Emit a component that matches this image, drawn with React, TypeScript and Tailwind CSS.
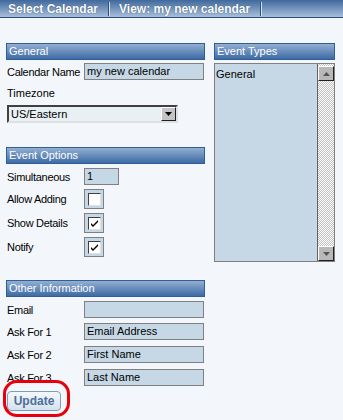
import React from "react";

const font = { fontFamily: '"Liberation Sans", Arial, sans-serif' };

const SectionHeader = ({ title }: { title: string }) => (
  <div className="h-[17px] border border-[#2f5f96] bg-linear-to-b from-[#93afd3] to-[#3d6ba4] pl-[2px] text-[11px] leading-[15px] text-white">
    {title}
  </div>
);

const TextBox = ({ value, className = "" }: { value?: string; className?: string }) => (
  <div
    className={`h-[17px] shrink-0 border border-[#808080] bg-[#c6d8e6] pl-[2px] text-[11px] leading-[15px] text-black ${className}`}
  >
    {value}
  </div>
);

const Check = ({ checked }: { checked: boolean }) => (
  <div className="flex h-[20px] w-[20px] shrink-0 items-center justify-center border border-[#808080] bg-[#c6d8e6]">
    <div className="flex h-[13px] w-[13px] items-center justify-center border border-t-[#404040] border-l-[#404040] border-b-[#e0e0e0] border-r-[#e0e0e0] bg-white">
      {checked && (
        <svg width="9" height="9" viewBox="0 0 9 9">
          <path d="M1 4 L3 6 L8 1 L8 3 L3 8 L1 6 Z" fill="#000" />
        </svg>
      )}
    </div>
  </div>
);

const ScrollBtn = ({ up }: { up: boolean }) => (
  <div className="flex h-[15px] w-[16px] items-center justify-center border border-t-[#fff] border-l-[#fff] border-b-[#202020] border-r-[#202020] bg-[#b8b8b8]">
    <svg width="7" height="4" viewBox="0 0 7 4">
      {up ? <path d="M0 4 L3.5 0 L7 4 Z" fill="#555" /> : <path d="M0 0 L7 0 L3.5 4 Z" fill="#555" />}
    </svg>
  </div>
);

const Row = ({ label, children, className = "" }: { label: string; children: React.ReactNode; className?: string }) => (
  <div className={`flex items-center ${className}`}>
    <div className="w-[78px] shrink-0 whitespace-nowrap pl-[1px] text-[11px] leading-[14px] tracking-[-0.3px] text-black">
      {label}
    </div>
    {children}
  </div>
);

export default function App() {
  return (
    <div className="h-[420px] w-[343px] overflow-hidden bg-[#f3f7fb]" style={font}>
      <div className="flex h-[18px] items-center border-b border-[#28507f] bg-linear-to-b from-[#40699c] to-[#a9bfdb] text-[12px] font-bold text-white [text-shadow:0_0_1px_#1d3d66]">
        <span className="pl-[8px] pr-[10px]">Select Calendar</span>
        <span className="h-[14px] w-[2px] border-l border-[#2a4f7a] border-r border-r-[#d6e2f0]" />
        <span className="pl-[9px] pr-[10px]">View: my new calendar</span>
        <span className="h-[14px] w-[2px] border-l border-[#2a4f7a] border-r border-r-[#d6e2f0]" />
      </div>

      <div className="mt-[25px] flex gap-[9px] pl-[6px]">
        <div className="flex w-[199px] flex-col">
          <SectionHeader title="General" />
          <Row label="Calendar Name" className="mt-[3px]">
            <TextBox value="my new calendar" className="w-[120px]" />
          </Row>
          <div className="mt-[6px] pl-[1px] text-[11px] leading-[14px] text-black">Timezone</div>
          <div className="mt-[5px] ml-[1px] flex h-[18px] w-[171px] items-center justify-between border-2 border-t-[#404040] border-l-[#404040] border-b-[#e0e0e0] border-r-[#e0e0e0] bg-[#e9f0f4] pl-[2px] text-[11px] text-black">
            <span>US/Eastern</span>
            <div className="flex h-[14px] w-[15px] items-center justify-center border border-t-[#fff] border-l-[#fff] border-b-[#202020] border-r-[#202020] bg-[#c4c4c4]">
              <svg width="7" height="4" viewBox="0 0 7 4">
                <path d="M0 0 L7 0 L3.5 4 Z" fill="#000" />
              </svg>
            </div>
          </div>

          <div className="mt-[24px]">
            <SectionHeader title="Event Options" />
          </div>
          <Row label="Simultaneous" className="mt-[4px]">
            <TextBox value="1" className="w-[35px]" />
          </Row>
          <Row label="Allow Adding" className="mt-[4px]">
            <Check checked={false} />
          </Row>
          <Row label="Show Details" className="mt-[4px]">
            <Check checked />
          </Row>
          <Row label="Notify" className="mt-[4px]">
            <Check checked />
          </Row>

          <div className="mt-[23px]">
            <SectionHeader title="Other Information" />
          </div>
          <Row label="Email" className="mt-[4px]">
            <TextBox className="w-[120px]" />
          </Row>
          <Row label="Ask For 1" className="mt-[5px]">
            <TextBox value="Email Address" className="w-[120px]" />
          </Row>
          <Row label="Ask For 2" className="mt-[6px]">
            <TextBox value="First Name" className="w-[120px]" />
          </Row>
          <Row label="Ask For 3" className="mt-[6px]">
            <TextBox value="Last Name" className="w-[120px]" />
          </Row>

          <div className="relative mt-[5px] ml-[1px]">
            <button className="flex h-[20px] w-[54px] items-center justify-center rounded-[4px] border border-[#7f9db9] bg-linear-to-b from-[#f4f8fb] to-[#d6e2ee] text-[12px] font-bold text-[#4d6f9a]">
              Update
            </button>
            <div className="pointer-events-none absolute left-[-4px] top-[-11px] h-[37px] w-[67px] rounded-[14px] border-[3px] border-[#e8000b]" />
          </div>
        </div>

        <div className="flex w-[121px] flex-col">
          <SectionHeader title="Event Types" />
          <div className="mt-[3px] flex h-[199px] border border-[#808080] bg-[#c6d8e6]">
            <div className="flex-1 pl-[1px] pt-[2px] text-[11px] text-black">General</div>
            <div className="flex w-[17px] flex-col border-l border-[#606060] bg-[repeating-conic-gradient(#c0c0c0_0_25%,#fff_0_50%)] bg-[length:2px_2px]">
              <div className="mt-[2px]">
                <ScrollBtn up />
              </div>
              <div className="flex-1" />
              <ScrollBtn up={false} />
            </div>
          </div>
        </div>
      </div>
    </div>
  );
}
